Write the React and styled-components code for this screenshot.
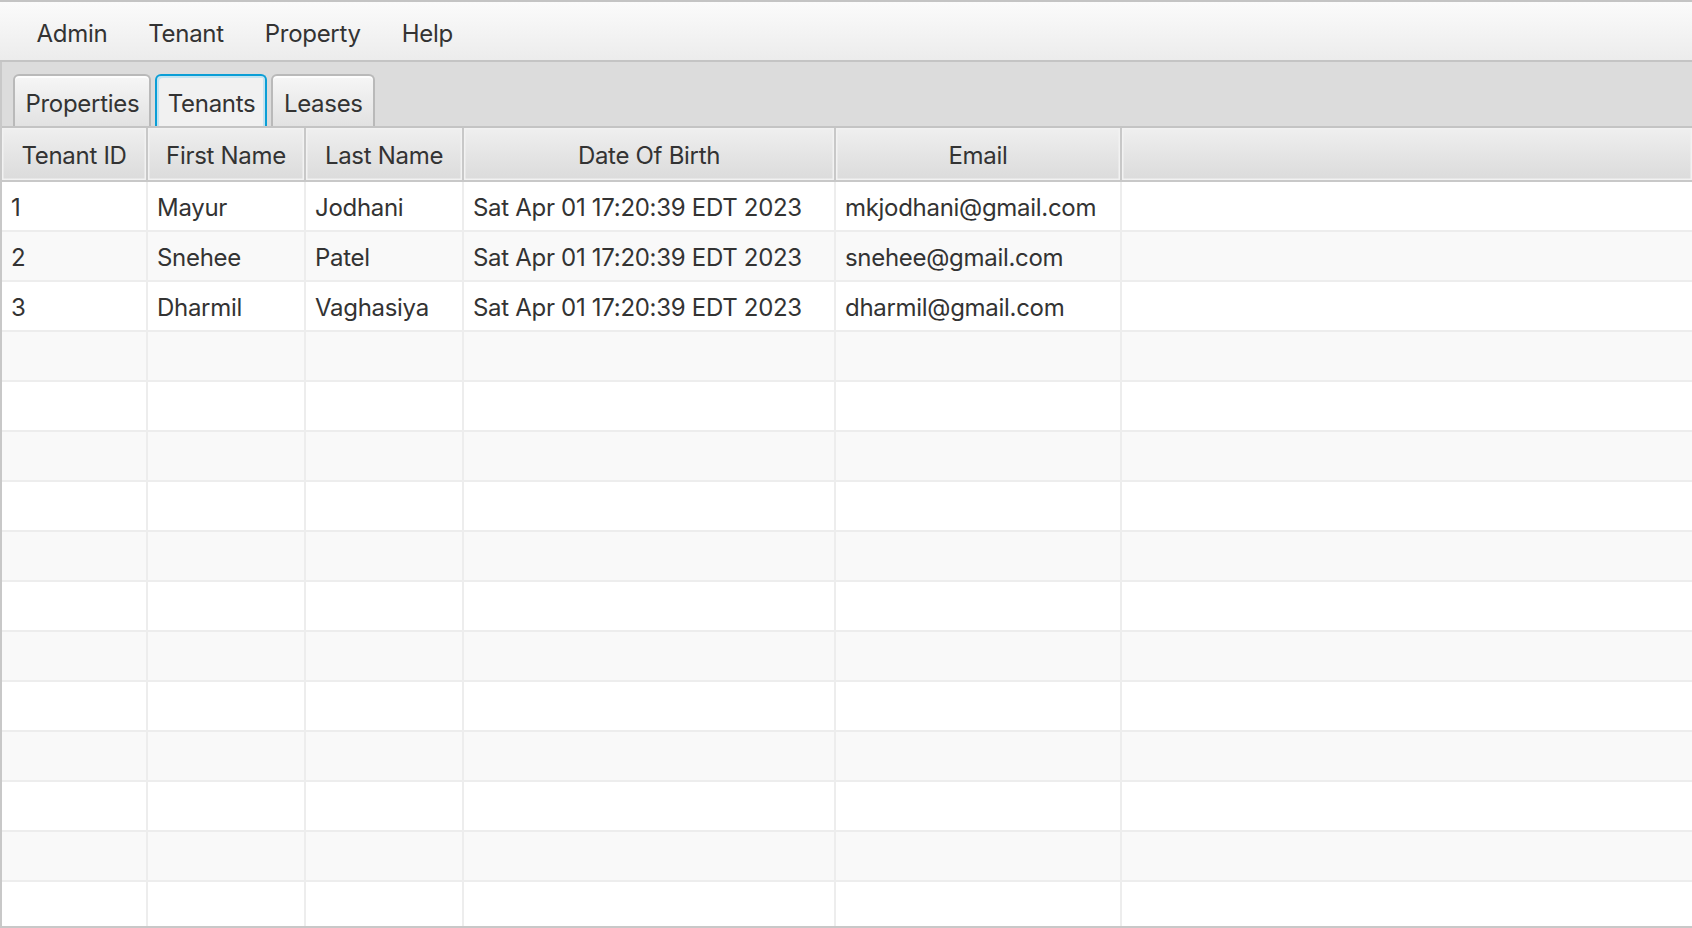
import React from "react";
import styled, { createGlobalStyle } from "styled-components";

const GlobalStyle = createGlobalStyle`
  html, body {
    margin: 0;
    padding: 0;
    height: 100%;
  }
  body {
    font-family: Inter, "Noto Sans", sans-serif;
    color: #333333;
    background: #f4f4f4;
    overflow: hidden;
  }
  #root {
    height: 100%;
  }
`;

const menus = ["Admin", "Tenant", "Property", "Help"];
const tabs = ["Properties", "Tenants", "Leases"];
const columns = [
  { title: "Tenant ID", width: "146px" },
  { title: "First Name", width: "158px" },
  { title: "Last Name", width: "158px" },
  { title: "Date Of Birth", width: "372px" },
  { title: "Email", width: "286px" },
];
const gridTemplate = columns.map((c) => c.width).join(" ") + " 1fr";

const tenants = [
  { id: 1, first: "Mayur", last: "Jodhani", dob: "Sat Apr 01 17:20:39 EDT 2023", email: "mkjodhani@gmail.com" },
  { id: 2, first: "Snehee", last: "Patel", dob: "Sat Apr 01 17:20:39 EDT 2023", email: "snehee@gmail.com" },
  { id: 3, first: "Dharmil", last: "Vaghasiya", dob: "Sat Apr 01 17:20:39 EDT 2023", email: "dharmil@gmail.com" },
];

const EMPTY_ROWS = 14;

const App = () => {
  const rows = [...tenants, ...Array.from({ length: EMPTY_ROWS }, () => null)];
  return (
    <Window>
      <GlobalStyle />
      <MenuBar>
        {menus.map((m) => (
          <MenuItem key={m}>{m}</MenuItem>
        ))}
      </MenuBar>
      <TabPane>
        <TabHeader>
          {tabs.map((t) => (
            <Tab key={t} selected={t === "Tenants"}>
              {t}
            </Tab>
          ))}
        </TabHeader>
        <TableView>
          <HeaderRow>
            {columns.map((c) => (
              <HeaderCell key={c.title}>{c.title}</HeaderCell>
            ))}
            <HeaderCell $filler />
          </HeaderRow>
          <Body>
            {rows.map((r, i) => (
              <Row key={i} odd={i % 2 === 1}>
                <Cell>{r && r.id}</Cell>
                <Cell>{r && r.first}</Cell>
                <Cell>{r && r.last}</Cell>
                <Cell>{r && r.dob}</Cell>
                <Cell>{r && r.email}</Cell>
                <Cell $last />
              </Row>
            ))}
          </Body>
        </TableView>
      </TabPane>
    </Window>
  );
};

const Window = styled.div`
  display: flex;
  flex-direction: column;
  height: 100vh;
  font-size: 24px;
  letter-spacing: -0.3px;
`;

const MenuBar = styled.div`
  display: flex;
  align-items: center;
  height: 58px;
  padding-left: 16px;
  border-top: 2px solid #c4c4c4;
  border-bottom: 2px solid #c4c4c4;
  background: linear-gradient(#fbfbfb, #ececec);
  flex-shrink: 0;
`;

const MenuItem = styled.div`
  padding: 5px 20.5px 0;
  color: #333333;
`;

const TabPane = styled.div`
  display: flex;
  flex-direction: column;
  flex: 1;
  min-height: 0;
  border-left: 2px solid #c8c8c8;
  border-bottom: 2px solid #c8c8c8;
`;

const TabHeader = styled.div`
  display: flex;
  align-items: flex-end;
  gap: 4px;
  height: 64px;
  padding-left: 11px;
  background: #dcdcdc;
  border-bottom: 2px solid #c4c4c4;
  flex-shrink: 0;
`;

const Tab = styled.div`
  display: flex;
  align-items: center;
  height: 52px;
  padding: 4px 10px 0 10.5px;
  box-sizing: border-box;
  border: 2px solid ${(p) => (p.selected ? "#0a9ed6" : "#b9b9b9")};
  border-bottom: none;
  border-radius: 6px 6px 0 0;
  background: ${(p) =>
    p.selected ? "#f1f1f1" : "linear-gradient(#f6f6f6, #e2e2e2)"};
  box-shadow: ${(p) =>
    p.selected
      ? "inset 2px 2px 0 #c4e4f1, inset -2px 0 0 #c4e4f1"
      : "inset 0 2px 0 #fdfdfd"};
  color: #333333;
`;

const TableView = styled.div`
  display: flex;
  flex-direction: column;
  flex: 1;
  min-height: 0;
  background: #ffffff;
`;

const HeaderRow = styled.div`
  display: grid;
  grid-template-columns: ${gridTemplate};
  height: 54px;
  box-sizing: border-box;
  border-bottom: 2px solid #c8c8c8;
  flex-shrink: 0;
`;

const HeaderCell = styled.div`
  display: flex;
  align-items: center;
  justify-content: center;
  padding-top: 3px;
  box-sizing: border-box;
  border-right: ${(p) => (p.$filler ? "none" : "2px solid #c8c8c8")};
  background: linear-gradient(#efefef, #dbdbdb);
  box-shadow: inset 0 0 0 1.5px #f2f2f2;
  color: #333333;
  white-space: nowrap;
`;

const Body = styled.div`
  flex: 1;
  min-height: 0;
  overflow: hidden;
`;

const Row = styled.div`
  display: grid;
  grid-template-columns: ${gridTemplate};
  height: 50px;
  box-sizing: border-box;
  border-bottom: 2px solid #ededed;
  background: ${(p) => (p.odd ? "#f9f9f9" : "#ffffff")};
`;

const Cell = styled.div`
  display: flex;
  align-items: center;
  padding: 2px 0 0 9px;
  box-sizing: border-box;
  border-right: ${(p) => (p.$last ? "none" : "2px solid #ededed")};
  white-space: nowrap;
  overflow: hidden;
  color: #333333;
`;

export default App;
